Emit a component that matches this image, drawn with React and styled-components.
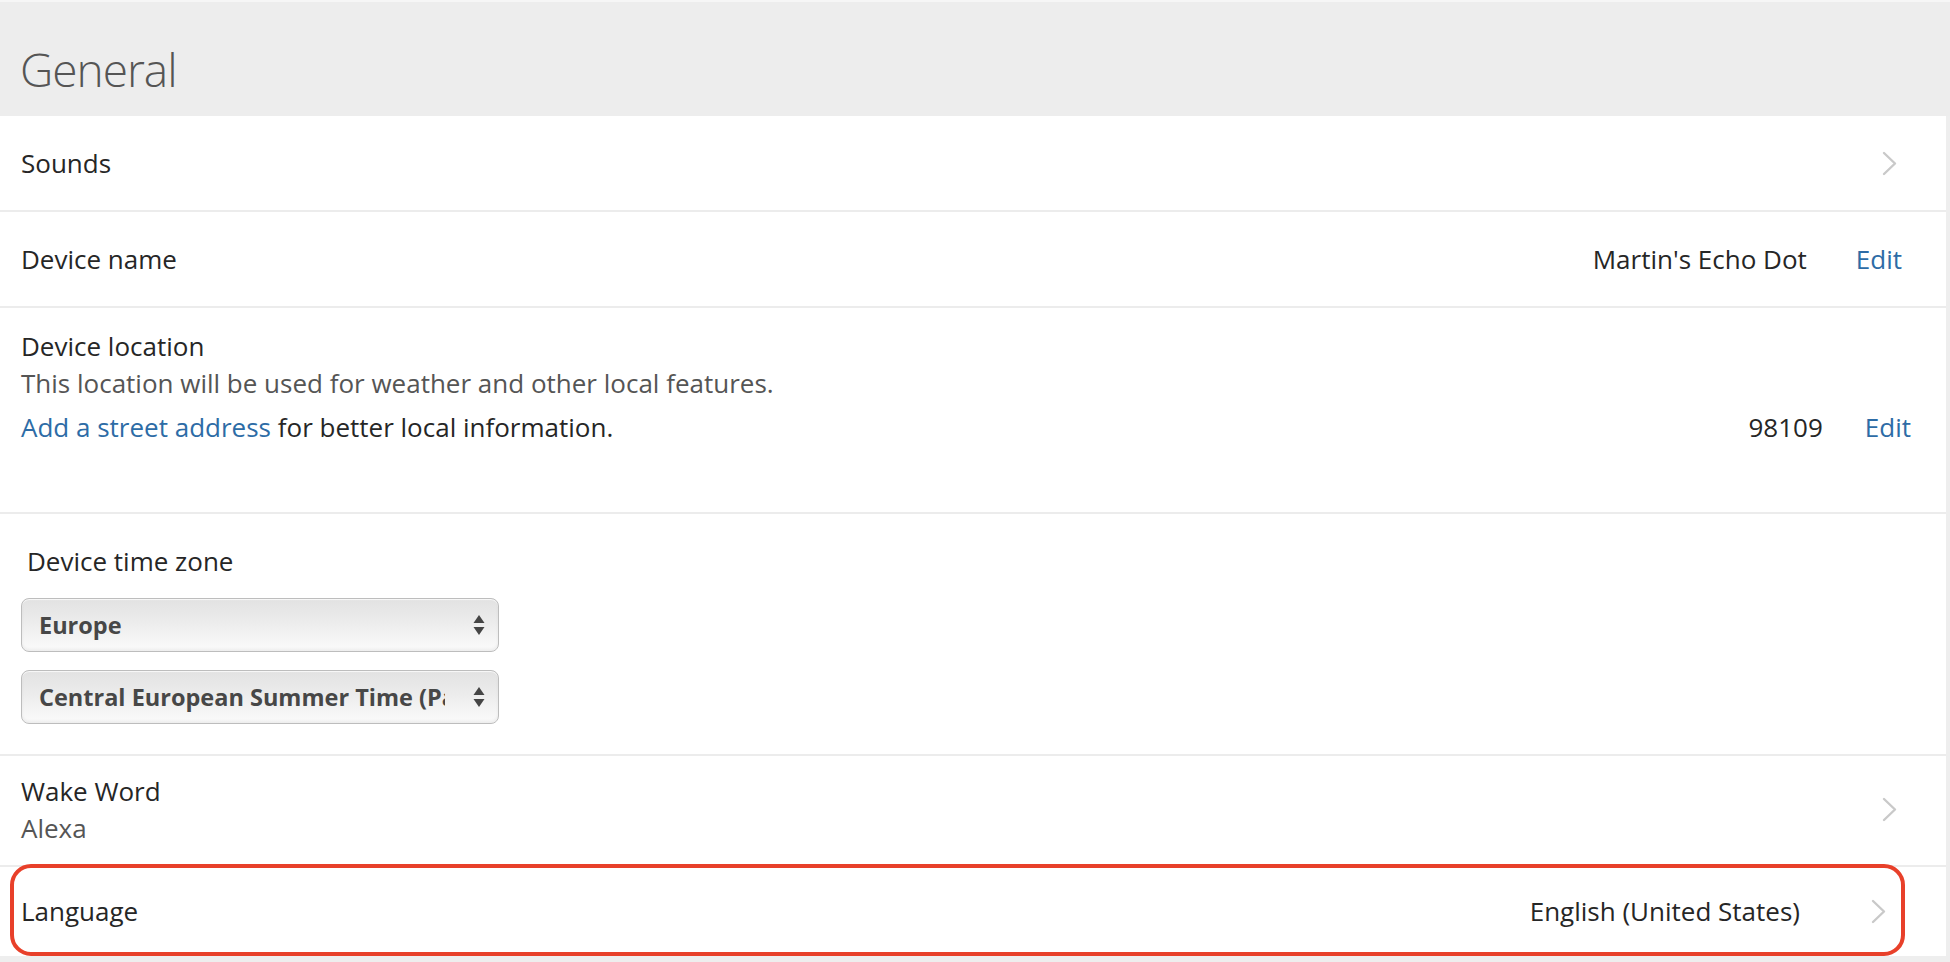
import React from 'react';
import styled, { createGlobalStyle } from 'styled-components';

const GlobalStyle = createGlobalStyle`
  html, body { margin: 0; padding: 0; background: #eeeeee; }
  body {
    font-family: "Open Sans", "Liberation Sans", sans-serif;
    color: #262626;
    -webkit-font-smoothing: antialiased;
  }
  * { box-sizing: border-box; }
`;

const Page = styled.div`
  display: flex;
  flex-direction: column;
  min-height: 962px;
  background: #eeeeee;
`;

const Header = styled.header`
  height: 116px;
  padding: 44px 0 0 20px;
  background: #ededed;
  border-top: 2px solid #f6f6f6;
`;

const Title = styled.h1`
  margin: 0;
  font-size: 46px;
  line-height: 46px;
  font-weight: 300;
  color: #555555;
  letter-spacing: -1px;
`;

const List = styled.div`
  display: flex;
  flex-direction: column;
  margin-right: 4px;
  background: #ffffff;
`;

const Row = styled.div`
  position: relative;
  display: flex;
  align-items: ${p => p.$align || 'center'};
  min-height: ${p => p.$h}px;
  padding: ${p => p.$pt || 0}px ${p => p.$pr || 0}px ${p => p.$pb || 0}px 21px;
  border-bottom: ${p => (p.$last ? 'none' : '2px solid #ececec')};
  font-size: 26px;
  line-height: 37px;
`;

const Label = styled.div`
  flex: 1;
  color: #262626;
`;

const Stack = styled.div`
  flex: 1;
  display: flex;
  flex-direction: column;
`;

const SubText = styled.div`
  color: #555555;
  line-height: ${p => p.$lh || 37}px;
`;

const InfoLine = styled.div`
  display: flex;
  align-items: center;
  margin-top: 7px;
`;

const LinkText = styled.a`
  color: #2d6ca6;
  text-decoration: none;
  cursor: pointer;
`;

const Plain = styled.span`
  color: #262626;
  white-space: pre;
`;

const RightGroup = styled.div`
  display: flex;
  align-items: center;
  gap: ${p => p.$gap}px;
  margin-left: auto;
`;

const Value = styled.span`
  color: #262626;
`;

const Chevron = styled.svg`
  width: 15px;
  height: 25px;
  flex: none;
  display: block;
`;

const ZoneLabel = styled.div`
  padding-left: 6px;
  color: #262626;
  margin-bottom: 18px;
`;

const SelectWrap = styled.div`
  position: relative;
  width: 478px;
  height: 54px;
  margin-bottom: ${p => p.$mb || 0}px;
`;

const Select = styled.select`
  appearance: none;
  -webkit-appearance: none;
  width: 100%;
  height: 100%;
  padding: 0 53px 0 17px;
  border: 1.5px solid #bdbdbd;
  border-radius: 8px;
  background: linear-gradient(#e2e2e2 0%, #ececec 45%, #fbfbfb 100%);
  box-shadow: inset 0 -2px 3px rgba(0, 0, 0, 0.06), inset 0 1px 1px rgba(255,255,255,0.8);
  font-family: "Open Sans", "Liberation Sans", sans-serif;
  font-weight: 700;
  font-size: 23.5px;
  color: #474747;
  outline: none;
  text-overflow: clip;
`;

const Arrows = styled.svg`
  position: absolute;
  right: 14px;
  top: 50%;
  transform: translateY(-50%);
  width: 12px;
  height: 22px;
  pointer-events: none;
`;

const Highlight = styled.div`
  position: absolute;
  left: 10px;
  top: -3px;
  width: 1895px;
  bottom: 0;
  border: 4.5px solid #e8402a;
  border-radius: 21px;
  pointer-events: none;
`;

const ChevronIcon = () => (
  <Chevron viewBox="0 0 15 25" fill="none">
    <path d="M2 2 L13 12.5 L2 23" stroke="#c9c9c9" strokeWidth="2.4" strokeLinecap="round" strokeLinejoin="round" />
  </Chevron>
);

const SelectArrows = () => (
  <Arrows viewBox="0 0 12 22">
    <path d="M6 1 L11.5 9 L0.5 9 Z" fill="#454545" />
    <path d="M6 21 L11.5 13 L0.5 13 Z" fill="#454545" />
  </Arrows>
);

const TimeSelect = ({ value, options, mb }) => (
  <SelectWrap $mb={mb}>
    <Select defaultValue={value}>
      {options.map(o => (
        <option key={o} value={o}>{o}</option>
      ))}
    </Select>
    <SelectArrows />
  </SelectWrap>
);

export default function App() {
  return (
    <>
      <GlobalStyle />
      <Page>
        <Header>
          <Title>General</Title>
        </Header>
        <List>
          <Row $h={96} $pr={49}>
            <Label>Sounds</Label>
            <ChevronIcon />
          </Row>

          <Row $h={96} $pr={44}>
            <Label>Device name</Label>
            <RightGroup $gap={49}>
              <Value>Martin's Echo Dot</Value>
              <LinkText>Edit</LinkText>
            </RightGroup>
          </Row>

          <Row $h={206} $align="flex-start" $pt={20} $pr={35} $pb={66}>
            <Stack>
              <Label>Device location</Label>
              <SubText>This location will be used for weather and other local features.</SubText>
              <InfoLine>
                <LinkText>Add a street address</LinkText>
                <Plain> for better local information.</Plain>
                <RightGroup $gap={42}>
                  <Value>98109</Value>
                  <LinkText>Edit</LinkText>
                </RightGroup>
              </InfoLine>
            </Stack>
          </Row>

          <Row $h={242} $align="flex-start" $pt={29} $pb={29}>
            <Stack>
              <ZoneLabel>Device time zone</ZoneLabel>
              <TimeSelect value="Europe" options={['Europe', 'America', 'Asia', 'Africa', 'Australia']} mb={18} />
              <TimeSelect
                value="Central European Summer Time (Paris)"
                options={['Central European Summer Time (Paris)', 'Central European Summer Time (Berlin)']}
              />
            </Stack>
          </Row>

          <Row $h={110} $pt={17} $pb={19} $pr={49}>
            <Stack>
              <Label>Wake Word</Label>
              <SubText $lh={36}>Alexa</SubText>
            </Stack>
            <ChevronIcon />
          </Row>

          <Row $h={89} $pr={60} $last>
            <Label>Language</Label>
            <RightGroup $gap={71}>
              <Value>English (United States)</Value>
              <ChevronIcon />
            </RightGroup>
            <Highlight />
          </Row>
        </List>
      </Page>
    </>
  );
}
